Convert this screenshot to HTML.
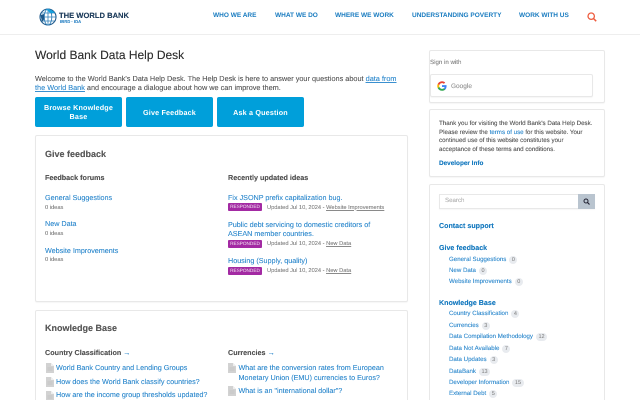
<!DOCTYPE html>
<html><head><meta charset="utf-8"><style>
html,body{margin:0;padding:0;width:640px;height:400px;overflow:hidden;background:#fff}
body{font-family:"Liberation Sans",sans-serif;color:#606060;text-rendering:geometricPrecision}
#w{position:absolute;left:0;top:0;width:640px;height:400px;overflow:hidden;contain:strict}
.t{position:absolute;white-space:nowrap;line-height:10px;font-size:7.2px;margin-top:1px;text-shadow:0 0 .3px currentColor}
.l{color:#3a90d0}
.b{font-weight:bold;color:#555}
.nav{position:absolute;top:11px;line-height:10px;font-size:6.5px;font-weight:bold;color:#1a7cc0;white-space:nowrap}
.card{position:absolute;background:#fff;border:1px solid #e8e8e8;border-radius:2px;box-sizing:border-box;box-shadow:0 1px 1px rgba(0,0,0,.04)}
.btn{position:absolute;top:97px;height:30px;width:87px;background:#009fda;border-radius:2px;color:#fff;font-weight:bold;font-size:7.2px;line-height:9px;text-align:center;display:flex;align-items:center;justify-content:center;letter-spacing:.17px}
.h{font-weight:bold;font-size:9px;color:#5a5a5a}
.sm{font-size:5.7px;color:#8a8a8a}
.tag{position:absolute;left:228px;width:34px;height:8px;background:#a32aa3;color:#f2e6f2;font-size:4.7px;line-height:8px;text-align:center;border-radius:1px;white-space:nowrap}
.u{text-decoration:underline}
.side{font-weight:bold;color:#1a7cc0;font-size:7.1px}
.s6{font-size:6.15px}
.p{font-size:6.2px}
.c{display:inline-block;background:#e8ebef;border-radius:4px;font-size:5.5px;color:#777;padding:0 2.5px;line-height:8px;margin-left:3px;text-shadow:none}
.doc{position:absolute}
</style></head><body><div id="w">

<div style="position:absolute;left:0;top:34px;width:640px;height:1px;background:#eee"></div>
<svg style="position:absolute;left:39px;top:8px" width="18" height="18" viewBox="0 0 18 18" fill="none">
<circle cx="9" cy="9" r="8" stroke="#1f5a8c" stroke-width="1.1"/>
<ellipse cx="9" cy="9" rx="3.8" ry="8" stroke="#2f7fb8" stroke-width=".9"/>
<path d="M9 1v16M1 9h16M2.5 5h13M2.5 13h13" stroke="#2f7fb8" stroke-width=".8"/>
<path d="M7 1.2C10 .6 14 2 16 5L11 5 9 3Z" fill="#18a0dc"/>
<path d="M1.500 7L5 6 5.500 11 3 14Z" fill="#1f5a8c"/>
</svg>
<div class="t b" style="left:59px;top:9.5px;font-size:7.6px;color:#22405f">THE WORLD BANK</div>
<div class="t" style="left:60px;top:15.500px;font-size:4.200px;color:#3a8cc8;font-weight:bold">IBRD · IDA</div>

<div class="nav" style="left:213px">WHO WE ARE</div>
<div class="nav" style="left:275px">WHAT WE DO</div>
<div class="nav" style="left:335px">WHERE WE WORK</div>
<div class="nav" style="left:412px">UNDERSTANDING POVERTY</div>
<div class="nav" style="left:519px">WORK WITH US</div>
<svg style="position:absolute;left:587px;top:12px" width="10" height="10" viewBox="0 0 10 10" fill="none"><circle cx="4.200" cy="4.200" r="3.200" stroke="#ee5a3c" stroke-width="1.300"/><path d="M6.600 6.600L9.200 9.200" stroke="#ee5a3c" stroke-width="1.500"/></svg>

<div class="t" style="left:35px;top:49px;font-size:12px;line-height:11px;color:#333">World Bank Data Help Desk</div>
<div class="t" style="left:35px;top:73px;font-size:7.32px">Welcome to the World Bank's Data Help Desk. The Help Desk is here to answer your questions about <span class="l u">data from</span></div>
<div class="t" style="left:35px;top:82px;font-size:7.32px"><span class="l u">the World Bank</span> and encourage a dialogue about how we can improve them.</div>

<div class="btn" style="left:35px">Browse Knowledge<br>Base</div>
<div class="btn" style="left:126px">Give Feedback</div>
<div class="btn" style="left:217px">Ask a Question</div>

<div class="card" style="left:35px;top:135px;width:373px;height:167px"></div>
<div class="t h" style="left:45px;top:148px">Give feedback</div>
<div class="t b" style="left:45px;top:172px">Feedback forums</div>
<div class="t l" style="left:45px;top:192px">General Suggestions</div>
<div class="t sm" style="left:45px;top:201.500px">0 ideas</div>
<div class="t l" style="left:45px;top:218px">New Data</div>
<div class="t sm" style="left:45px;top:227.500px">0 ideas</div>
<div class="t l" style="left:45px;top:245px">Website Improvements</div>
<div class="t sm" style="left:45px;top:254px">0 ideas</div>

<div class="t b" style="left:228px;top:172px">Recently updated ideas</div>
<div class="t l" style="left:228px;top:192px">Fix JSONP prefix capitalization bug.</div>
<div class="tag" style="top:203px">RESPONDED</div>
<div class="t sm" style="left:267px;top:201.500px">Updated Jul 10, 2024 - <span class="u">Website Improvements</span></div>
<div class="t l" style="left:228px;top:219px">Public debt servicing to domestic creditors of</div>
<div class="t l" style="left:228px;top:228px">ASEAN member countries.</div>
<div class="tag" style="top:240px">RESPONDED</div>
<div class="t sm" style="left:267px;top:238px">Updated Jul 10, 2024 - <span class="u">New Data</span></div>
<div class="t l" style="left:228px;top:255px">Housing (Supply, quality)</div>
<div class="tag" style="top:267px">RESPONDED</div>
<div class="t sm" style="left:267px;top:265px">Updated Jul 10, 2024 - <span class="u">New Data</span></div>

<div class="card" style="left:35px;top:310px;width:373px;height:90px;border-bottom:0;border-radius:2px 2px 0 0;box-shadow:none"></div>
<div class="t h" style="left:45px;top:322px">Knowledge Base</div>
<div class="t b" style="left:45px;top:346.500px">Country Classification <span style="color:#3a90d0;font-weight:normal">→</span></div>
<svg class="doc" style="left:46px;top:363px" width="8" height="10" viewBox="0 0 8 10"><path d="M0 0H5L8 3V10H0Z" fill="#d2d2d2"/><path d="M5 0L8 3H5Z" fill="#eee"/><path d="M1.500 5H6.500M1.500 7H6.500" stroke="#b5b5b5" stroke-width=".6"/></svg>
<div class="t l" style="left:56px;top:362px">World Bank Country and Lending Groups</div>
<svg class="doc" style="left:46px;top:377px" width="8" height="10" viewBox="0 0 8 10"><path d="M0 0H5L8 3V10H0Z" fill="#d2d2d2"/><path d="M5 0L8 3H5Z" fill="#eee"/><path d="M1.500 5H6.500M1.500 7H6.500" stroke="#b5b5b5" stroke-width=".6"/></svg>
<div class="t l" style="left:56px;top:376px">How does the World Bank classify countries?</div>
<svg class="doc" style="left:46px;top:391px" width="8" height="9" viewBox="0 0 8 9"><path d="M0 0H5L8 3V9H0Z" fill="#d2d2d2"/><path d="M5 0L8 3H5Z" fill="#eee"/><path d="M1.500 5H6.500M1.500 7H6.500" stroke="#b5b5b5" stroke-width=".6"/></svg>
<div class="t l" style="left:56px;top:389px">How are the income group thresholds updated?</div>

<div class="t b" style="left:228px;top:346.500px">Currencies <span style="color:#3a90d0;font-weight:normal">→</span></div>
<svg class="doc" style="left:228px;top:363px" width="8" height="10" viewBox="0 0 8 10"><path d="M0 0H5L8 3V10H0Z" fill="#d2d2d2"/><path d="M5 0L8 3H5Z" fill="#eee"/><path d="M1.500 5H6.500M1.500 7H6.500" stroke="#b5b5b5" stroke-width=".6"/></svg>
<div class="t l" style="left:238.500px;top:362px">What are the conversion rates from European</div>
<div class="t l" style="left:238.500px;top:371.500px">Monetary Union (EMU) currencies to Euros?</div>
<svg class="doc" style="left:228px;top:386px" width="8" height="10" viewBox="0 0 8 10"><path d="M0 0H5L8 3V10H0Z" fill="#d2d2d2"/><path d="M5 0L8 3H5Z" fill="#eee"/><path d="M1.500 5H6.500M1.500 7H6.500" stroke="#b5b5b5" stroke-width=".6"/></svg>
<div class="t l" style="left:238.500px;top:385px">What is an "international dollar"?</div>

<div class="card" style="left:429px;top:50px;width:176px;height:53px"></div>
<div class="t s6" style="left:430px;top:57px;color:#8a8a8a">Sign in with</div>
<div class="card" style="left:430px;top:74px;width:163px;height:23px"></div>
<svg style="position:absolute;left:437px;top:81px" width="10" height="10" viewBox="0 0 48 48"><path fill="#4285F4" d="M46 24.500c0-1.600-.1-3.100-.4-4.500H24v9h12.400c-.5 2.900-2.100 5.300-4.600 7v5.800h7.400C43.500 37.800 46 31.700 46 24.500z"/><path fill="#34A853" d="M24 47c6.200 0 11.400-2 15.200-5.600l-7.400-5.800c-2.100 1.400-4.700 2.200-7.800 2.200-6 0-11.100-4-12.900-9.500H3.500v6C7.300 41.800 15 47 24 47z"/><path fill="#FBBC05" d="M11.100 28.300c-.5-1.400-.7-2.800-.7-4.300s.3-3 .7-4.300v-6H3.500C2 16.700 1 20.200 1 24s.9 7.300 2.500 10.300z"/><path fill="#EA4335" d="M24 10.200c3.400 0 6.400 1.200 8.800 3.400l6.600-6.600C35.400 3.300 30.200 1 24 1 15 1 7.300 6.200 3.500 13.700l7.600 6C12.900 14.200 18 10.200 24 10.200z"/></svg>
<div class="t" style="left:451px;top:81px;font-size:6.500px;color:#999">Google</div>

<div class="card" style="left:429px;top:109px;width:176px;height:68px"></div>
<div class="t p" style="left:439px;top:118px">Thank you for visiting the World Bank's Data Help Desk.</div>
<div class="t p" style="left:439px;top:126.500px">Please review the <span class="l">terms of use</span> for this website. Your</div>
<div class="t p" style="left:439px;top:135px">continued use of this website constitutes your</div>
<div class="t p" style="left:439px;top:143.500px">acceptance of these terms and conditions.</div>
<div class="t b" style="left:439px;top:157.500px;font-size:6.400px;color:#1a7cc0">Developer Info</div>

<div class="card" style="left:429px;top:184px;width:176px;height:216px;border-bottom:0;border-radius:2px 2px 0 0;box-shadow:none"></div>
<div class="card" style="left:439px;top:194px;width:156px;height:15px;border-radius:0"></div>
<div class="t s6" style="left:445px;top:195px;color:#b5b5b5">Search</div>
<div style="position:absolute;left:578px;top:194px;width:17px;height:15px;background:#b9c4cf"></div>
<svg style="position:absolute;left:583px;top:198px" width="7" height="7" viewBox="0 0 7 7" fill="none"><circle cx="3" cy="3" r="2" stroke="#223" stroke-width="1"/><path d="M4.500 4.500L6.500 6.500" stroke="#223" stroke-width="1.200"/></svg>

<div class="t side" style="left:439px;top:219.500px">Contact support</div>
<div class="t side" style="left:439px;top:241.500px">Give feedback</div>
<div class="t l s6" style="left:449px;top:253.500px">General Suggestions<span class="c">0</span></div>
<div class="t l s6" style="left:449px;top:264.500px">New Data<span class="c">0</span></div>
<div class="t l s6" style="left:449px;top:276px">Website Improvements<span class="c">0</span></div>
<div class="t side" style="left:439px;top:296.500px">Knowledge Base</div>
<div class="t l s6" style="left:449px;top:308px">Country Classification<span class="c">4</span></div>
<div class="t l s6" style="left:449px;top:319.500px">Currencies<span class="c">3</span></div>
<div class="t l s6" style="left:449px;top:331px">Data Compilation Methodology<span class="c">12</span></div>
<div class="t l s6" style="left:449px;top:342.500px">Data Not Available<span class="c">7</span></div>
<div class="t l s6" style="left:449px;top:354px">Data Updates<span class="c">3</span></div>
<div class="t l s6" style="left:449px;top:365.500px">DataBank<span class="c">13</span></div>
<div class="t l s6" style="left:449px;top:377px">Developer Information<span class="c">15</span></div>
<div class="t l s6" style="left:449px;top:388px">External Debt<span class="c">5</span></div>
</div></body></html>
